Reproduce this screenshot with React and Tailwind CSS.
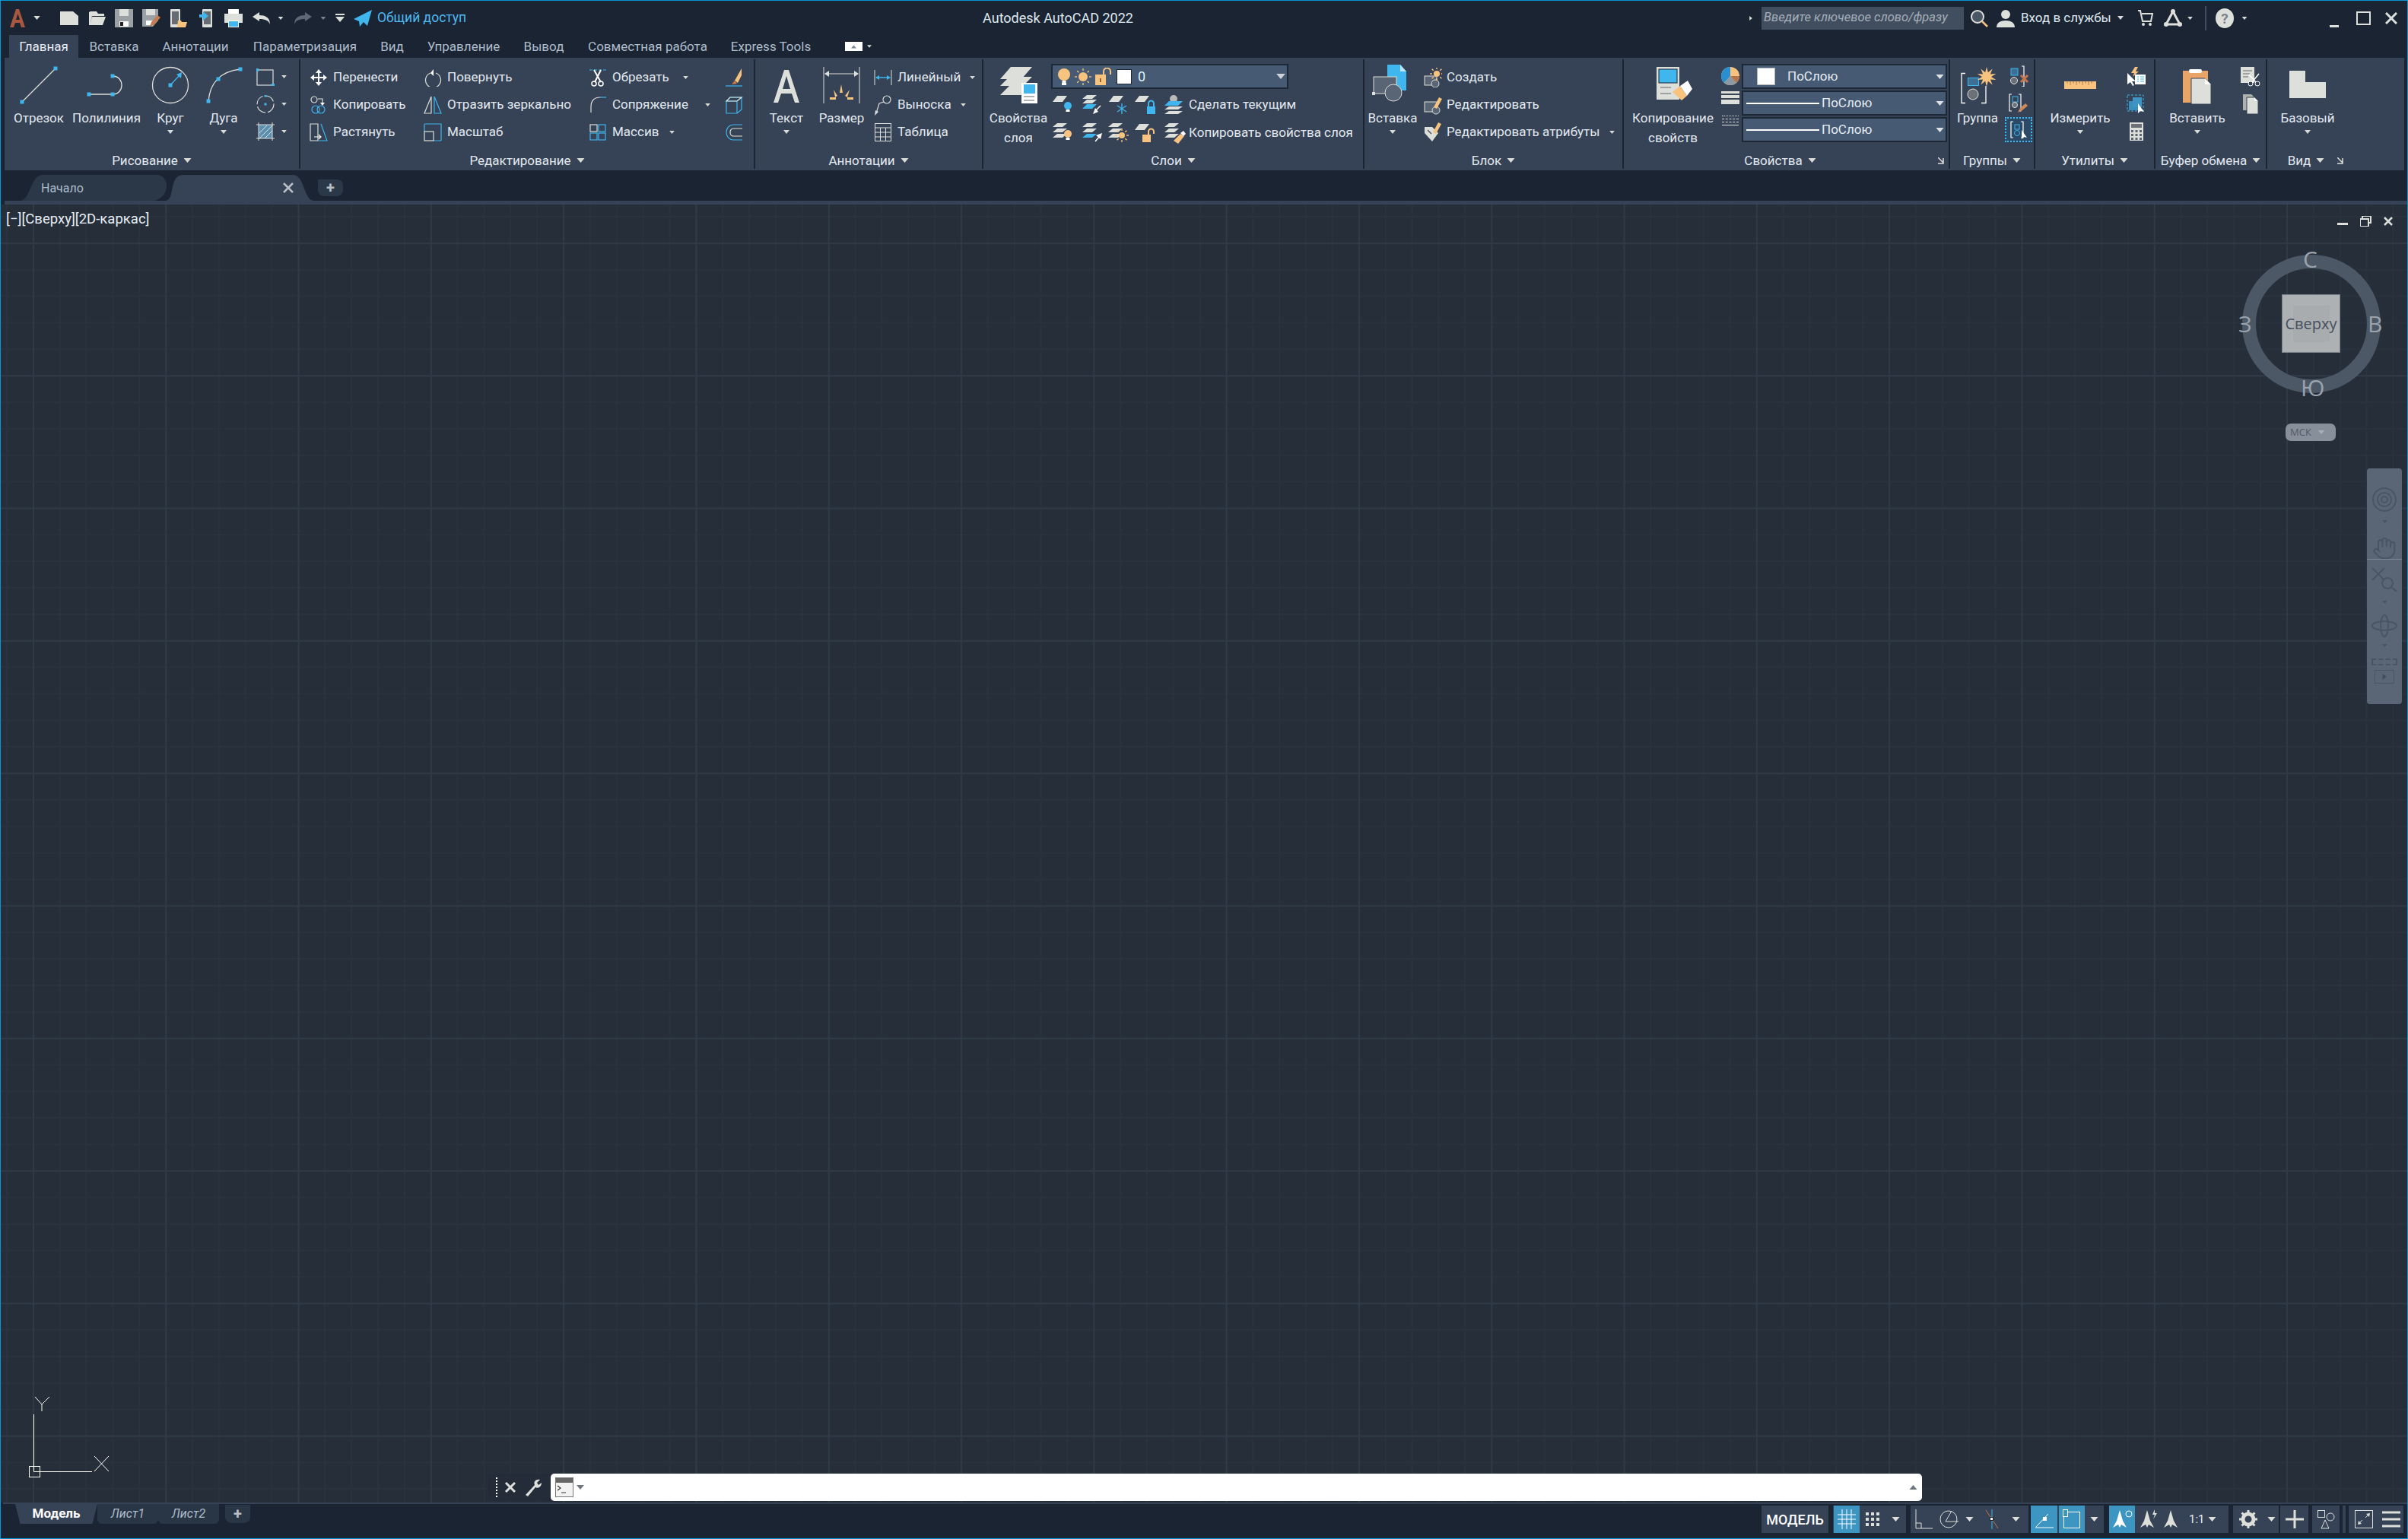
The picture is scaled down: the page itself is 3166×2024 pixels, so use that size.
import React from "react";
import { Hand } from "lucide-react";

const G = "#dcdfda";
const B = "#3fb6ee";
const O = "#f8c27f";
const W = "#ffffff";
const PANEL = "#364255";

const S = ({ w = 30, h = 30, children, className = "" }) => (
  <svg width={w} height={h} viewBox={`0 0 ${w} ${h}`} className={`block shrink-0 ${className}`}>
    {children}
  </svg>
);

const Tri = ({ w = 9, h = 5, c = "#d9dcd8", up = false, className = "" }) => (
  <svg width={w} height={h} viewBox="0 0 10 6" className={`block shrink-0 ${className}`}>
    <polygon points={up ? "0,6 10,6 5,0" : "0,0 10,0 5,6"} fill={c} />
  </svg>
);

const Dot = ({ x, y, s = 5, c = B }) => <rect x={x - s / 2} y={y - s / 2} width={s} height={s} fill={c} />;

const Layer = ({ x, y, w = 18, h = 5, f = G, sk = 6 }) => (
  <polygon points={`${x + sk},${y} ${x + w},${y} ${x + w - sk},${y + h} ${x},${y + h}`} fill={f} />
);

const Bulb = ({ x, y, f = O, r = 5 }) => (
  <g>
    <circle cx={x} cy={y} r={r} fill={f} />
    <rect x={x - 2.5} y={y + r} width={5} height={3} fill={W} />
  </g>
);

const Lock = ({ x, y, open, f = O }) => (
  <g>
    <rect x={x} y={y + 7} width={11} height={10} fill={f} />
    <path d={open ? `M${x + 8} ${y + 7}V${y + 3}a3.5 3.5 0 0 1 7 0v3` : `M${x + 2} ${y + 7}V${y + 3}a3.5 3.5 0 0 1 7 0v4`} fill="none" stroke={f} strokeWidth="2" />
  </g>
);

const Sun = ({ x, y, r = 6, f = O, s = O }) => (
  <g>
    <circle cx={x} cy={y} r={r} fill={f} />
    {[0, 45, 90, 135, 180, 225, 270, 315].map((a) => (
      <line key={a} x1={x} y1={y - r - 2} x2={x} y2={y - r - 5} stroke={s} strokeWidth="1.4" transform={`rotate(${a} ${x} ${y})`} />
    ))}
  </g>
);

const starPoints = (cx, cy, outer, inner, n) =>
  Array.from({ length: n * 2 }, (_, i) => {
    const r = i % 2 ? inner : outer;
    const a = (Math.PI * i) / n;
    return `${cx + r * Math.sin(a)},${cy - r * Math.cos(a)}`;
  }).join(" ");

// ---- title bar ----
const TitleBar = () => (
  <div className="flex h-[45px] items-center text-[#dfe7ee]">
    <S w={24} h={26} className="ml-[10px]">
      <path d="M2 25L10 1h4l8 24h-5l-2-6H9l-2 6zM10 15h5l-2.500-8z" fill="#a9583f" />
    </S>
    <Tri w={9} h={5} className="ml-[9px]" />
    <S w={24} h={20} className="ml-[26px]">
      <path d="M0 1h17l7 6v12H0z" fill={G} />
    </S>
    <S w={24} h={20} className="ml-[12px]">
      <path d="M4 1h8l2 3h8v3H6L3 19H2V2zM6 8h18l-4 11H3z" fill={G} />
    </S>
    <S w={24} h={25} className="ml-[12px]">
      <path d="M0 1h24v24H0z" fill="#9ba1a4" />
      <rect x="6" y="1" width="12" height="9" fill={G} />
      <rect x="6" y="17" width="12" height="7" fill={W} />
      <rect x="7" y="18" width="4" height="5" fill="#222" />
    </S>
    <S w={25} h={25} className="ml-[12px]">
      <path d="M0 1h21v15l-7 8H0z" fill="#9ba1a4" />
      <rect x="5" y="1" width="12" height="8" fill={G} />
      <rect x="5" y="16" width="9" height="6" fill={W} />
      <path d="M10 24l2-6 8-9 4 3-8 9z" fill="#c47b4f" />
    </S>
    <S w={22} h={24} className="ml-[12px]">
      <rect x="0" y="0" width="13" height="24" rx="1" fill={G} />
      <rect x="2" y="3" width="9" height="17" fill="#666c72" />
      <path d="M10 15h4l1 2h7l-2 7H9z" fill={O} />
    </S>
    <S w={18} h={24} className="ml-[16px]">
      <rect x="4" y="0" width="13" height="24" rx="1" fill={G} />
      <rect x="6" y="3" width="9" height="17" fill="#666c72" />
      <path d="M0 7h5V3l7 6-7 6v-4H0z" fill={B} />
    </S>
    <S w={24} h={24} className="ml-[15px]">
      <rect x="5" y="0" width="14" height="7" fill={W} />
      <rect x="0" y="6" width="24" height="12" fill={G} />
      <rect x="5" y="15" width="14" height="9" fill={W} />
      <rect x="6" y="16" width="12" height="7" fill={B} />
    </S>
    <S w={24} h={16} className="ml-[13px]">
      <path d="M0 6l9-6v4c8 0 14 3 14 12-2-5-6-7-14-7v3z" fill={G} />
    </S>
    <Tri w={8} h={4} className="ml-[9px]" />
    <S w={24} h={16} className="ml-[13px]">
      <path d="M24 6l-9-6v4C7 4 1 7 1 16c2-5 6-7 14-7v3z" fill="#5d6875" />
    </S>
    <Tri w={8} h={4} c="#7c8691" className="ml-[11px]" />
    <S w={12} h={11} className="ml-[12px]">
      <rect width="12" height="2" fill={G} />
      <polygon points="0,4 12,4 6,11" fill={G} />
    </S>
    <S w={24} h={22} className="ml-[12px]">
      <path d="M0 12L24 0l-6 21-5-5-5 6-1-7z" fill={B} />
    </S>
    <span className="ml-[7px] w-[118px] whitespace-nowrap text-[17.500px] text-[#4fb9f0]">Общий доступ</span>
    <span className="ml-[677px] w-[200px] whitespace-nowrap text-center text-[18px]">Autodesk AutoCAD 2022</span>
    <Tri w={6} h={10} c={G} className="ml-[808px] -rotate-90" />
    <div className="ml-[11px] flex h-[30px] w-[266px] items-center bg-[#414e60] pl-[3px] text-[16.500px] whitespace-nowrap text-[#a5aeb8] italic">
      Введите ключевое слово/фразу
    </div>
    <S w={24} h={24} className="ml-[8px]">
      <circle cx="10" cy="10" r="8" fill="#4c5766" stroke={G} strokeWidth="2" />
      <line x1="16" y1="16" x2="23" y2="23" stroke={O} strokeWidth="2.500" />
    </S>
    <S w={24} h={24} className="ml-[11px]">
      <circle cx="12" cy="7" r="6" fill={G} />
      <path d="M0 24c0-6 5-9 12-9s12 3 12 9z" fill={G} />
    </S>
    <span className="ml-[8px] w-[120px] whitespace-nowrap text-[17px]">Вход в службы</span>
    <Tri w={8} h={5} className="ml-[7px]" />
    <S w={20} h={22} className="ml-[19px]">
      <path d="M0 1h3l3 14h11l2-10H5" fill="none" stroke={G} strokeWidth="2" />
      <circle cx="7" cy="19" r="2" fill={G} />
      <circle cx="16" cy="19" r="2" fill={G} />
    </S>
    <S w={24} h={24} className="ml-[14px]">
      <path d="M12 3L3 20h18z" fill="none" stroke={G} strokeWidth="3" />
      <circle cx="12" cy="3" r="3" fill={G} />
      <circle cx="3" cy="20" r="3" fill={G} />
      <circle cx="21" cy="20" r="3" fill={G} />
    </S>
    <Tri w={7} h={4} className="ml-[7px]" />
    <div className="ml-[16px] h-[32px] w-[2px] bg-[#3f4d60]" />
    <S w={24} h={26} className="ml-[12px]">
      <ellipse cx="12" cy="13" rx="12" ry="13" fill={G} />
      <text x="12" y="20" textAnchor="middle" fontSize="19" fontWeight="700" fontFamily="Roboto" fill="#7c838a">?</text>
    </S>
    <Tri w={8} h={4} className="ml-[10px]" />
    <div className="mt-[22px] ml-[108px] h-[3px] w-[12px] bg-[#dcdfda]" />
    <div className="ml-[23px] h-[18px] w-[19px] border-2 border-[#dcdfda]" />
    <S w={16} h={16} className="ml-[19px]">
      <path d="M1 1l14 14M15 1L1 15" stroke={G} strokeWidth="3" />
    </S>
  </div>
);

// ---- ribbon tabs ----
const tabs = [
  ["Вставка", "w-[94px]"],
  ["Аннотации", "w-[120px]"],
  ["Параметризация", "w-[168px]"],
  ["Вид", "w-[61px]"],
  ["Управление", "w-[127px]"],
  ["Вывод", "w-[84px]"],
  ["Совместная работа", "w-[189px]"],
  ["Express Tools", "w-[135px]"],
];

const RibbonTabs = () => (
  <div className="flex h-[30px] items-center pl-[11px] text-[17px] whitespace-nowrap text-[#aebccb]">
    <div className="flex h-full w-[91px] items-center justify-center bg-[#364255] pt-[1px] text-[#e6edf4]">Главная</div>
    {tabs.map(([label, w]) => (
      <div key={label} className={`flex h-full items-center justify-center pt-[1px] ${w}`}>
        {label}
      </div>
    ))}
    <div className="ml-[30px] flex h-[12px] w-[23px] items-center justify-center bg-white">
      <Tri w={7} h={5} c="#7c8691" up />
    </div>
    <Tri w={6} h={4} className="ml-[6px]" />
  </div>
);

// ---- ribbon parts ----
const Panel = ({ w, title, corner, titleClass = "", children }) => (
  <div className={`relative flex shrink-0 flex-col ${w}`}>
    <div className="flex h-[124px] pt-[4px]">{children}</div>
    <div className={`flex h-[24px] items-center justify-center gap-[7px] text-[17px] text-[#e2e9f0] ${titleClass}`}>
      <span>{title}</span>
      <Tri w={11} h={6} className="mb-[2px]" />
    </div>
    {corner && (
      <S w={8} h={9} className={`absolute bottom-[8px] ${corner}`}>
        <path d="M0 0l7 7M7 1v7H0" fill="none" stroke={G} strokeWidth="1.500" />
      </S>
    )}
  </div>
);

const Sep = () => <div className="my-[2px] w-[2px] shrink-0 bg-[#1a2433]" />;

const Big = ({ w, label, label2, arrow, icon }) => (
  <div className={`flex shrink-0 flex-col items-center text-[#e2e9f0] ${w}`}>
    <div className="h-[64px]">{icon}</div>
    <div className="h-[22px] text-[17px] leading-[22px] whitespace-nowrap">{label}</div>
    {label2 && <div className="h-[30px] text-[17px] leading-[30px] whitespace-nowrap">{label2}</div>}
    {arrow && (
      <div className="flex h-[14px] items-center">
        <Tri w={8} h={5} />
      </div>
    )}
  </div>
);

const Small = ({ icon, label, arrow, gap = "ml-[7px]" }) => (
  <div className="flex h-[36px] items-center text-[17px] whitespace-nowrap text-[#e2e9f0]">
    <div className="flex w-[30px] shrink-0 justify-center">{icon}</div>
    {label && <span className="ml-[4px]">{label}</span>}
    {arrow && <Tri w={7} h={4} className={gap} />}
  </div>
);

const Col = ({ w, children }) => <div className={`flex shrink-0 flex-col pt-[4px] ${w}`}>{children}</div>;

const DrawPanel = () => (
  <Panel w="w-[387px]" title="Рисование">
    <Big
      w="w-[90px]"
      label="Отрезок"
      icon={
        <S w={90} h={64}>
          <line x1="23" y1="54" x2="67" y2="10" stroke={G} strokeWidth="1.300" />
          <Dot x={23} y={54} />
          <Dot x={67} y={10} />
        </S>
      }
    />
    <Big
      w="w-[88px]"
      label="Полилиния"
      icon={
        <S w={88} h={64}>
          <path d="M21 44H52C68 44 68 20 52 20" fill="none" stroke={G} strokeWidth="1.300" />
          <Dot x={21} y={44} />
          <Dot x={52} y={44} />
          <Dot x={52} y={20} />
        </S>
      }
    />
    <Big
      w="w-[80px]"
      label="Круг"
      arrow
      icon={
        <S w={80} h={64}>
          <circle cx="40" cy="32" r="23.500" fill="none" stroke={G} strokeWidth="1.300" />
          <line x1="40" y1="32" x2="53" y2="18" stroke={B} strokeWidth="1.300" />
          <polygon points="55,15 54,23 48,18" fill={B} />
          <Dot x={40} y={32} />
        </S>
      }
    />
    <Big
      w="w-[60px]"
      label="Дуга"
      arrow
      icon={
        <S w={60} h={64}>
          <path d="M10 53C12 30 25 14 52 11" fill="none" stroke={G} strokeWidth="1.300" />
          <Dot x={10} y={53} />
          <Dot x={23} y={24} />
          <Dot x={52} y={11} />
        </S>
      }
    />
    <div className="flex shrink-0 flex-col pt-[3px] pl-[10px]">
      <Small
        gap="ml-[6px]"
        arrow
        icon={
          <S w={24} h={24}>
            <rect x="1" y="3" width="21" height="20" fill="none" stroke={G} strokeWidth="1.200" />
            <Dot x={1} y={3} s={4} />
            <Dot x={22} y={23} s={4} />
          </S>
        }
      />
      <Small
        gap="ml-[6px]"
        arrow
        icon={
          <S w={24} h={24}>
            <circle cx="12" cy="12" r="11" fill="none" stroke={G} strokeDasharray="14 3" strokeWidth="1.200" />
            <Dot x={12} y={12} s={3} />
            <Dot x={12} y={1} s={3} />
          </S>
        }
      />
      <Small
        gap="ml-[6px]"
        arrow
        icon={
          <S w={24} h={24}>
            <rect x="3" y="3" width="18" height="18" fill="#5d8fb0" />
            <path d="M4 14L14 4M4 21L21 4M11 21L21 11" stroke={G} strokeWidth="1" />
            <path d="M3 0v24M21 0v24M0 3h24M0 21h24" stroke={G} strokeWidth="1" />
          </S>
        }
      />
    </div>
  </Panel>
);

const EditPanel = () => (
  <Panel w="w-[596px]" title="Редактирование">
    <div className="w-[9px] shrink-0" />
    <Col w="w-[150px]">
      <Small
        label="Перенести"
        icon={
          <S w={24} h={24}>
            <path d="M12 1l4 5h-3v5h5V8l5 4-5 4v-3h-5v5h3l-4 5-4-5h3v-5H6v3l-5-4 5-4v3h5V6H8z" fill={W} />
          </S>
        }
      />
      <Small
        label="Копировать"
        icon={
          <S w={24} h={24}>
            <circle cx="6" cy="5" r="4" fill="none" stroke={G} strokeWidth="1.200" />
            <path d="M11 4h6v6" fill="none" stroke={G} strokeWidth="1.200" />
            <polygon points="14,9 20,9 17,13" fill={W} />
            <circle cx="8" cy="18" r="5" fill="none" stroke={B} strokeWidth="1.200" />
            <circle cx="15" cy="18" r="5" fill="none" stroke={B} strokeWidth="1.200" />
          </S>
        }
      />
      <Small
        label="Растянуть"
        icon={
          <S w={24} h={24}>
            <path d="M1 1h10v22H1z" fill="none" stroke={G} strokeWidth="1.200" />
            <path d="M15 1l8 22H11" fill="none" stroke={B} strokeWidth="1.200" />
            <path d="M6 18h9m-3-3l3 3-3 3" fill="none" stroke={W} strokeWidth="1.200" />
          </S>
        }
      />
    </Col>
    <Col w="w-[217px]">
      <Small
        label="Повернуть"
        icon={
          <S w={24} h={24}>
            <path d="M16 6a10 10 0 1 1-7 0" fill="none" stroke={G} strokeWidth="1.200" />
            <polygon points="9,6 13,1 13,10" fill={W} />
          </S>
        }
      />
      <Small
        label="Отразить зеркально"
        icon={
          <S w={24} h={24}>
            <path d="M10 1L1 23h9z" fill="none" stroke={G} strokeWidth="1.200" />
            <path d="M14 1l9 22h-9z" fill="none" stroke={B} strokeWidth="1.200" />
          </S>
        }
      />
      <Small
        label="Масштаб"
        icon={
          <S w={24} h={24}>
            <path d="M1 1h22v22" fill="none" stroke={B} strokeWidth="1.200" />
            <path d="M1 1v10M23 23h-10" fill="none" stroke={B} strokeWidth="1.200" />
            <rect x="1" y="11" width="12" height="12" fill="none" stroke={G} strokeWidth="1.200" />
          </S>
        }
      />
    </Col>
    <Col w="w-[179px]">
      <Small
        label="Обрезать"
        arrow
        gap="ml-[18px]"
        icon={
          <S w={24} h={24}>
            <path d="M1 2h22" stroke={B} strokeDasharray="4 2" strokeWidth="1.200" />
            <path d="M7 2l9 16M16 2L8 18" stroke={W} strokeWidth="2" />
            <circle cx="7" cy="20" r="3" fill="none" stroke={W} strokeWidth="1.500" />
            <circle cx="16" cy="20" r="3" fill="none" stroke={W} strokeWidth="1.500" />
          </S>
        }
      />
      <Small
        label="Сопряжение"
        arrow
        gap="ml-[22px]"
        icon={
          <S w={24} h={24}>
            <path d="M3 22V14C3 6 8 2 15 2" fill="none" stroke={G} strokeWidth="1.200" />
            <path d="M15 2h8" stroke={B} strokeWidth="1.200" />
          </S>
        }
      />
      <Small
        label="Массив"
        arrow
        gap="ml-[14px]"
        icon={
          <S w={24} h={24}>
            {[
              [2, 2, G],
              [13, 2, B],
              [2, 13, B],
              [13, 13, B],
            ].map(([x, y, c]) => (
              <rect key={`${x}-${y}`} x={x} y={y} width="9" height="9" fill="none" stroke={c} strokeWidth="1.200" />
            ))}
          </S>
        }
      />
    </Col>
    <Col w="w-[30px]">
      <Small
        icon={
          <S w={24} h={24}>
            <path d="M22 0L13 16l4 3 5-10z" fill={O} />
            <path d="M13 16l-4 5 7-1z" fill="#c47b4f" />
            <line x1="1" y1="23" x2="23" y2="23" stroke={B} strokeWidth="1.200" />
          </S>
        }
      />
      <Small
        icon={
          <S w={24} h={24}>
            <path d="M2 7h14v16H2zM2 7l5-5h15l-6 5M22 2v16l-6 5" fill="none" stroke={B} strokeWidth="1.200" />
            <path d="M7 2h15l-6 5H2z" fill="none" stroke={G} strokeWidth="1.200" />
          </S>
        }
      />
      <Small
        icon={
          <S w={24} h={24}>
            <path d="M23 2H11a9 10 0 0 0 0 20h12" fill="none" stroke={B} strokeWidth="1.200" />
            <path d="M23 7H11a4 5 0 0 0 0 10h12" fill="none" stroke={G} strokeWidth="1.200" />
          </S>
        }
      />
    </Col>
  </Panel>
);

const AnnotationPanel = () => (
  <Panel w="w-[298px]" title="Аннотации">
    <div className="w-[5px] shrink-0" />
    <Big
      w="w-[72px]"
      label="Текст"
      arrow
      icon={
        <S w={72} h={64}>
          <path d="M33 12h6l14 43h-6l-4-12H29l-4 12h-6zM31 37h10l-5-17z" fill={G} />
        </S>
      }
    />
    <Big
      w="w-[73px]"
      label="Размер"
      icon={
        <S w={73} h={64}>
          <path d="M13 8v48M60 8v48" stroke={G} strokeWidth="1" />
          <path d="M15 17h43" stroke={G} strokeWidth="1" />
          <path d="M14 17l6-4v8zM59 17l-6-4v8z" fill={G} />
          <path d="M36 31l2 11-4 0zM26 38l5 8-3 2zM47 38l-3 10-3-2zM21 48h8v3h-8zM44 48h8v3h-8z" fill={O} />
        </S>
      }
    />
    <div className="w-[3px] shrink-0" />
    <Col w="w-[145px]">
      <Small
        label="Линейный"
        arrow
        gap="ml-[12px]"
        icon={
          <S w={24} h={24}>
            <path d="M1 2v20M23 2v20" stroke={G} strokeWidth="1" />
            <path d="M3 12h18" stroke={B} strokeWidth="1.500" />
            <path d="M2 12l5-3v6zM22 12l-5-3v6z" fill={B} />
          </S>
        }
      />
      <Small
        label="Выноска"
        arrow
        gap="ml-[12px]"
        icon={
          <S w={24} h={28}>
            <circle cx="17" cy="7" r="5" fill="none" stroke={G} strokeWidth="1.200" />
            <path d="M13 10L7 12 3 25" fill="none" stroke={G} strokeWidth="1.200" />
            <polygon points="1,28 2,21 6,23" fill={G} />
          </S>
        }
      />
      <Small
        label="Таблица"
        icon={
          <S w={22} h={24}>
            <rect x="0.500" y="0.500" width="21" height="23" fill="none" stroke={G} />
            <path d="M0 6h22M0 12h22M0 18h22M7.500 6v18M14.500 6v18" stroke={G} strokeWidth="1" />
          </S>
        }
      />
    </Col>
  </Panel>
);

const LayerCombo = () => (
  <div className="mt-[4px] flex h-[33px] w-[312px] items-center border-2 border-[#1d2837] bg-[#475a73] text-[18px] text-[#dff1fb]">
    <S w={18} h={26} className="ml-[6px]">
      <Bulb x={9} y={10} r={8} />
      <rect x="6" y="21" width="6" height="3" fill={W} />
    </S>
    <S w={28} h={28} className="ml-[2px]">
      <Sun x={14} y={14} r={6} />
    </S>
    <S w={22} h={24} className="ml-[2px]">
      <rect x="0" y="9" width="14" height="14" fill={O} />
      <path d="M11 9V5a4.500 4.500 0 0 1 9 0v4" fill="none" stroke={O} strokeWidth="2" />
      <rect x="6" y="14" width="1.500" height="5" fill="#6a4a2a" />
    </S>
    <div className="ml-[6px] h-[20px] w-[20px] border border-[#1d2837] bg-white" />
    <span className="ml-[8px]">0</span>
    <Tri w={12} h={7} c="#cdd3d8" className="mr-[2px] ml-auto" />
  </div>
);

const LayerIcon = ({ children }) => (
  <div className="flex h-[36px] w-[36px] shrink-0 items-center justify-center">
    <S w={36} h={28}>
      {children}
    </S>
  </div>
);

const LayerPanel = () => (
  <Panel w="w-[499px]" title="Слои">
    <div className="w-[3px] shrink-0" />
    <Big
      w="w-[86px]"
      label="Свойства"
      label2="слоя"
      icon={
        <S w={86} h={64}>
          <Layer x={19} y={33} w={42} h={12} sk={12} />
          <Layer x={19} y={21} w={42} h={12} sk={12} />
          <Layer x={19} y={8} w={42} h={16} sk={14} />
          <rect x="47" y="29" width="21" height="27" fill={W} />
          <rect x="50" y="31" width="15" height="12" fill={B} />
          <path d="M50 47h14M50 52h14" stroke="#666" strokeWidth="1" />
        </S>
      }
    />
    <div className="flex shrink-0 flex-col">
      <LayerCombo />
      <div className="mt-[3px] -ml-[2px] flex items-center">
        <LayerIcon>
          <Layer x={4} y={2} w={19} h={8} />
          <Bulb x={24} y={15} f={B} />
        </LayerIcon>
        <LayerIcon>
          <Layer x={7} y={1} w={19} />
          <Layer x={7} y={7} w={19} />
          <Layer x={7} y={13} w={19} h={6} f={B} />
          <path d="M31 15l-7 7" stroke={W} strokeWidth="1.500" />
          <polygon points="21,26 24,18 28,23" fill={W} />
        </LayerIcon>
        <LayerIcon>
          <Layer x={6} y={2} w={19} h={8} />
          <path d="M23 12v14M17 15l12 8M29 15l-12 8" stroke={B} strokeWidth="1.400" />
        </LayerIcon>
        <LayerIcon>
          <Layer x={4} y={2} w={19} h={8} />
          <Lock x={20} y={9} f={B} />
        </LayerIcon>
        <LayerIcon>
          <circle cx="19" cy="6" r="5" fill="#b6bab8" />
          <Layer x={7} y={9} w={24} h={6} f={B} />
          <Layer x={7} y={16} w={24} h={4} />
          <Layer x={7} y={22} w={24} h={4} />
        </LayerIcon>
        <span className="ml-[3px] text-[17px] whitespace-nowrap text-[#e2e9f0]">Сделать текущим</span>
      </div>
      <div className="mt-[1px] -ml-[2px] flex items-center">
        <LayerIcon>
          <Layer x={4} y={1} w={19} />
          <Layer x={4} y={8} w={19} />
          <Layer x={4} y={15} w={19} />
          <Bulb x={24} y={15} />
        </LayerIcon>
        <LayerIcon>
          <Layer x={7} y={1} w={19} />
          <Layer x={7} y={8} w={19} />
          <Layer x={7} y={15} w={19} f={B} />
          <path d="M24 25l6-7" stroke={W} strokeWidth="1.500" />
          <polygon points="33,14 25,17 31,22" fill={W} />
        </LayerIcon>
        <LayerIcon>
          <Layer x={5} y={1} w={19} />
          <Layer x={5} y={8} w={19} />
          <Layer x={5} y={15} w={19} />
          <Sun x={23} y={17} r={4} />
        </LayerIcon>
        <LayerIcon>
          <Layer x={4} y={2} w={19} h={8} />
          <Lock x={14} y={9} open />
        </LayerIcon>
        <LayerIcon>
          <Layer x={7} y={1} w={19} />
          <Layer x={7} y={8} w={19} />
          <Layer x={7} y={15} w={19} />
          <path d="M19 24l9-9 5 3-8 10z" fill={O} />
          <path d="M28 14l4-3 3 4-3 3z" fill={W} />
        </LayerIcon>
        <span className="ml-[3px] text-[17px] whitespace-nowrap text-[#e2e9f0]">Копировать свойства слоя</span>
      </div>
    </div>
  </Panel>
);

const BlockPanel = () => (
  <Panel w="w-[339px]" title="Блок">
    <Big
      w="w-[74px]"
      label="Вставка"
      arrow
      icon={
        <S w={74} h={64}>
          <path d="M30 5h17l8 9v25H30z" fill={B} />
          <polygon points="47,5 55,14 47,14" fill="#bfe6f8" />
          <rect x="12" y="21" width="30" height="22" fill="#596474" stroke={G} />
          <circle cx="38" cy="42" r="11" fill="#596474" stroke={G} />
          <Dot x={12} y={43} s={4} c={G} />
        </S>
      }
    />
    <Col w="w-[260px]">
      <Small
        label="Создать"
        icon={
          <S w={26} h={26}>
            <rect x="3" y="11" width="16" height="12" fill="#596474" stroke={G} />
            <circle cx="17" cy="21" r="5" fill="#596474" stroke={G} />
            <Sun x={19} y={8} r={4} />
          </S>
        }
      />
      <Small
        label="Редактировать"
        icon={
          <S w={26} h={26}>
            <rect x="3" y="9" width="17" height="13" fill="#596474" stroke={G} />
            <circle cx="18" cy="20" r="5" fill="#596474" stroke={G} />
            <path d="M15 16l7-13 4 2-7 13z" fill={O} />
          </S>
        }
      />
      <Small
        label="Редактировать атрибуты"
        arrow
        gap="ml-[12px]"
        icon={
          <S w={26} h={26}>
            <path d="M3 6h10l8 8-8 11-10-11z" fill={G} />
            <path d="M14 13l7-13 4 2-7 13z" fill={O} />
            <path d="M7 10l5 5" stroke="#555" strokeWidth="1.500" />
          </S>
        }
      />
    </Col>
  </Panel>
);

const PropCombo = ({ white, children }) => (
  <div className="flex h-[33px] w-[270px] items-center border-2 border-[#1d2837] bg-[#475a73] text-[17px] whitespace-nowrap text-[#e6eef5]">
    {white && <div className="ml-[18px] h-[23px] w-[24px] border border-[#aeb3b6] bg-white" />}
    {children}
    <Tri w={11} h={6} c="#dde2e6" className="mr-[2px] ml-auto" />
  </div>
);

const PropertyPanel = () => (
  <Panel w="w-[427px]" title="Свойства" corner="right-[6px]" titleClass="pr-[16px]">
    <Big
      w="w-[129px]"
      label="Копирование"
      label2="свойств"
      icon={
        <S w={129} h={64}>
          <rect x="43" y="8" width="30" height="43" fill={G} />
          <rect x="46" y="11" width="24" height="18" fill={B} stroke="#1d2837" />
          <path d="M48 35h14M48 43h14" stroke="#666" strokeWidth="1" />
          <path d="M64 41l10-8 9 13-7 6z" fill={O} />
          <path d="M74 33l10-7 6 11-7 9z" fill={W} />
        </S>
      }
    />
    <div className="flex w-[22px] shrink-0 flex-col items-center pt-[8px]">
      <svg width="24" height="24" viewBox="0 0 24 24" className="block">
        <circle cx="12" cy="12" r="12" fill={O} />
        <path d="M12 12L12 0A12 12 0 0 0 4 21z" fill="#2a8fd0" />
        <path d="M12 12L4 21A12 12 0 0 0 20 21z" fill="#8c9aa6" />
        <path d="M12 12L20 21A12 12 0 0 0 24 12z" fill="#b5744a" />
      </svg>
      <div className="mt-[8px] flex flex-col">
        <div className="h-[3px] w-[24px] bg-[#dcdfda]" />
        <div className="mt-[2px] h-[4px] w-[24px] bg-[#dcdfda]" />
        <div className="mt-[2px] h-[6px] w-[24px] bg-[#dcdfda]" />
      </div>
      <div className="mt-[15px] flex flex-col gap-[3px]">
        <div className="h-[1px] w-[22px] border-t border-dotted border-[#dcdfda]" />
        <div className="h-[1px] w-[22px] border-t border-dashed border-[#dcdfda]" />
        <div className="h-[1px] w-[22px] border-t border-dashed border-[#dcdfda]" />
        <div className="h-[1px] w-[22px] border-t border-[#dcdfda]" />
      </div>
    </div>
    <div className="mt-[4px] ml-[4px] flex shrink-0 flex-col gap-[2px]">
      <PropCombo white>
        <span className="ml-[16px]">ПоСлою</span>
      </PropCombo>
      <PropCombo>
        <div className="ml-[4px] h-[2px] w-[96px] bg-white" />
        <span className="ml-[3px]">ПоСлою</span>
      </PropCombo>
      <PropCombo>
        <div className="ml-[4px] h-[2px] w-[96px] bg-white" />
        <span className="ml-[3px]">ПоСлою</span>
      </PropCombo>
    </div>
  </Panel>
);

const GroupPanel = () => (
  <Panel w="w-[110px]" title="Группы">
    <Big
      w="w-[72px]"
      label="Группа"
      icon={
        <S w={72} h={64}>
          <path d="M20 16.500h-5v39h5M47 33v22.500h-6" fill="none" stroke={W} strokeWidth="1.300" />
          <rect x="23.500" y="22.500" width="14" height="10" fill="#3b6f93" stroke={B} />
          <circle cx="30" cy="44" r="7" fill="#6b7177" stroke={G} />
          <polygon points={starPoints(48, 21, 13, 6, 10)} fill={O} />
        </S>
      }
    />
    <div className="flex shrink-0 flex-col">
      <div className="h-[2px]" />
      <div className="flex h-[36px] w-[36px] items-center justify-center">
        <S w={28} h={28}>
          <path d="M18 1h3v27h-3" fill="none" stroke={W} strokeWidth="1.200" />
          <rect x="4" y="4" width="9" height="9" fill="#3b6f93" stroke={B} />
          <circle cx="8" cy="20" r="4.500" fill="#6b7177" stroke={G} />
          <path d="M17 13l9 9M26 13l-9 9" stroke="#c8754c" strokeWidth="3" />
        </S>
      </div>
      <div className="flex h-[36px] w-[36px] items-center justify-center">
        <S w={26} h={28}>
          <path d="M4 2H1v22h3M13 2h3v22h-3" fill="none" stroke={W} strokeWidth="1.200" />
          <rect x="5" y="5" width="7" height="7" fill="none" stroke={B} />
          <circle cx="8" cy="16" r="3.500" fill="#6b7177" stroke={G} />
          <path d="M12 26l3-6 7-6 3 3-7 6z" fill="#d08a5a" />
        </S>
      </div>
      <div className="flex h-[33px] w-[36px] items-center justify-center border-2 border-dotted border-[#3fb6ee] bg-[#2b4a68]">
        <S w={26} h={26}>
          <path d="M6 2H3v21h3M16 2h3v21h-3" fill="none" stroke={W} strokeWidth="1.200" />
          <rect x="8" y="6" width="6" height="6" fill="none" stroke={B} />
          <circle cx="11" cy="17" r="3.500" fill="none" stroke={B} />
          <path d="M17 13v12l3-3 4 1z" fill={W} />
        </S>
      </div>
    </div>
  </Panel>
);

const UtilPanel = () => (
  <Panel w="w-[156px]" title="Утилиты">
    <Big
      w="w-[118px]"
      label="Измерить"
      arrow
      icon={
        <S w={118} h={64}>
          <rect x="38" y="27" width="42" height="10" fill={O} />
          <path d="M42 27v3M46 27v5M50 27v3M54 27v5M58 27v3M62 27v5M66 27v3M70 27v5M74 27v3" stroke="#b58850" strokeWidth="1" />
        </S>
      }
    />
    <div className="flex shrink-0 flex-col pt-[3px]">
      {[
        <S key="a" w={26} h={26}>
          <path d="M11 0L6 8h4l-2 5 8-7h-4l3-6z" fill={O} />
          <rect x="11" y="10" width="14" height="13" fill={W} />
          <path d="M14 13h2M18 13h5M14 16h2M18 16h5M14 19h2M18 19h5" stroke={B} strokeWidth="1.200" />
          <path d="M1 8v15l4-3 3 5 2-1-3-5h5z" fill={W} />
        </S>,
        <S key="b" w={26} h={26}>
          <rect x="1" y="1" width="21" height="21" fill="none" stroke={B} strokeDasharray="3 2" />
          <rect x="3" y="9" width="13" height="12" fill="#3b8fbd" />
          <rect x="8" y="4" width="12" height="13" fill="#3f94c4" />
          <path d="M15 12v13l3-3 5 1z" fill={W} />
        </S>,
        <S key="c" w={18} h={24}>
          <rect width="18" height="24" fill={G} />
          <rect x="2" y="2" width="14" height="5" fill="#6b7177" />
          <path d="M2 10h3v3H2zM7.500 10h3v3h-3zM13 10h3v3h-3zM2 15h3v3H2zM7.500 15h3v3h-3zM13 15h3v3h-3zM2 20h3v3H2zM7.500 20h3v3h-3zM13 20h3v3h-3z" fill="#5d6470" />
        </S>,
      ].map((icon, i) => (
        <div key={i} className="flex h-[36px] w-[30px] items-center justify-center">
          {icon}
        </div>
      ))}
    </div>
  </Panel>
);

const ClipPanel = () => (
  <Panel w="w-[145px]" title="Буфер обмена">
    <Big
      w="w-[110px]"
      label="Вставить"
      arrow
      icon={
        <S w={110} h={64}>
          <rect x="36" y="13" width="33" height="42" fill="#e9a568" />
          <rect x="44" y="11" width="17" height="5" rx="2" fill={W} />
          <path d="M47 23h18l8 8v26H47z" fill={G} stroke={PANEL} />
          <polygon points="65,23 73,31 65,31" fill={W} />
        </S>
      }
    />
    <div className="flex shrink-0 flex-col pt-[3px]">
      <div className="flex h-[36px] w-[30px] items-center justify-center">
        <S w={26} h={26}>
          <path d="M0 0h18v21H0z" fill={G} />
          <path d="M3 5h12M3 9h9M3 13h7" stroke="#666" strokeWidth="1" />
          <path d="M11 10l9 10M24 9l-9 11" stroke={W} strokeWidth="1.500" />
          <circle cx="13" cy="22" r="3" fill={PANEL} stroke={W} />
          <circle cx="22" cy="22" r="3" fill={PANEL} stroke={W} />
        </S>
      </div>
      <div className="flex h-[36px] w-[30px] items-center justify-center">
        <S w={20} h={26}>
          <path d="M0 0h11l4 4v17H0z" fill="#aeb2ae" />
          <path d="M5 4h10l5 5v17H5z" fill={G} stroke={PANEL} />
          <polygon points="15,4 20,9 15,9" fill={W} />
        </S>
      </div>
    </div>
  </Panel>
);

const ViewPanel = () => (
  <Panel w="w-[178px]" title="Вид" corner="right-[78px]" titleClass="pr-[76px]">
    <Big
      w="w-[106px]"
      label="Базовый"
      arrow
      icon={
        <S w={106} h={64}>
          <path d="M29 13h21v15h27v21H29z" fill={G} />
        </S>
      }
    />
  </Panel>
);

const Ribbon = () => (
  <div className="ml-[5px] flex h-[148px] w-[3155px] bg-[#364255]">
    <DrawPanel />
    <Sep />
    <EditPanel />
    <Sep />
    <AnnotationPanel />
    <Sep />
    <LayerPanel />
    <Sep />
    <BlockPanel />
    <Sep />
    <PropertyPanel />
    <Sep />
    <GroupPanel />
    <Sep />
    <UtilPanel />
    <Sep />
    <ClipPanel />
    <Sep />
    <ViewPanel />
  </div>
);

// ---- drawing tabs ----
const DocTabs = () => (
  <div className="flex h-[40px] items-end pl-[25px]">
    <div className="flex h-[34px] w-[196px] items-center bg-[#2b3848] pt-[2px] pl-[28px] text-[16px] text-[#aebccb] [clip-path:path('M0_34C14_34_14_0_30_0H180C198_0_198_30_176_34Z')]">
      Начало
    </div>
    <div className="-ml-[5px] flex h-[34px] w-[196px] items-center justify-end bg-[#364255] pr-[27px] [clip-path:path('M0_34C14_34_4_0_24_0H168C184_0_182_34_196_34Z')]">
      <S w={14} h={14}>
        <path d="M1 1l12 12M13 1L1 13" stroke="#b9bec4" strokeWidth="2.500" />
      </S>
    </div>
    <div className="mb-[6px] ml-[5px] flex h-[22px] w-[33px] items-center justify-center rounded-tr-[8px] rounded-b-[8px] bg-[#2b3848] text-[20px] leading-none font-bold text-[#b9bec4]">
      +
    </div>
  </div>
);

// ---- canvas overlays ----
const ViewCube = () => (
  <div className="absolute top-[66px] right-[35px] h-[182px] w-[182px]">
    <div className="absolute inset-0 rounded-full border-[18px] border-[#4d5866]" />
    <div className="absolute top-[52px] left-[52px] flex h-[77px] w-[77px] items-center justify-center border border-[#78808a] bg-[#adb1b3] text-[20px] text-[#454f5d] [font-family:'Open_Sans',sans-serif]">
      <div className="absolute top-[14px] left-[14px] h-[48px] w-[48px] bg-[#a8acaf]" />
      <span className="relative">Сверху</span>
    </div>
    <span className="absolute -top-[12px] left-[80px] text-[30px] leading-[36px] text-[#9aa3ad] [font-family:'Open_Sans',sans-serif]">С</span>
    <span className="absolute -bottom-[11px] left-[77px] text-[30px] leading-[36px] text-[#9aa3ad] [font-family:'Open_Sans',sans-serif]">Ю</span>
    <span className="absolute top-[73px] -left-[5px] text-[30px] leading-[36px] text-[#9aa3ad] [font-family:'Open_Sans',sans-serif]">З</span>
    <span className="absolute top-[73px] left-[165px] text-[30px] leading-[36px] text-[#9aa3ad] [font-family:'Open_Sans',sans-serif]">В</span>
    <div className="absolute top-[222px] left-[57px] flex h-[23px] w-[66px] items-center gap-[8px] rounded-[7px] bg-[#878f9a] pl-[6px] text-[13px] text-[#505a68] [font-family:'Open_Sans',sans-serif]">
      МСК
      <Tri w={10} h={5} c="#a9afb6" />
    </div>
  </div>
);

const NavBar = () => (
  <div className="absolute top-[347px] right-[7px] flex h-[310px] w-[46px] flex-col items-center rounded-[4px] bg-[#5a6675] pt-[24px] text-[#4a5564]">
    <S w={34} h={34}>
      <circle cx="17" cy="17" r="15" fill="none" stroke="#4a5564" strokeWidth="2" />
      <circle cx="17" cy="17" r="9" fill="none" stroke="#4a5564" strokeWidth="2" />
      <circle cx="17" cy="17" r="4" fill="none" stroke="#4a5564" strokeWidth="2" />
    </S>
    <Tri w={7} h={4} c="#4a5564" className="mt-[10px]" />
    <Hand size={32} strokeWidth={1.5} className="mt-[17px] shrink-0" />
    <div className="-mt-[2px] h-[1px] w-full shrink-0 bg-[#7f8995]" />
    <S w={36} h={34} className="mt-[9px]">
      <path d="M2 2l16 16M18 2L2 18" stroke="#4a5564" strokeWidth="2" />
      <circle cx="22" cy="22" r="7" fill="none" stroke="#4a5564" strokeWidth="2" />
      <path d="M27 27l7 6" stroke="#4a5564" strokeWidth="2" />
    </S>
    <Tri w={7} h={4} c="#4a5564" className="mt-[11px]" />
    <S w={36} h={32} className="mt-[13px]">
      <ellipse cx="18" cy="16" rx="16" ry="6" fill="none" stroke="#4a5564" strokeWidth="2" />
      <ellipse cx="18" cy="16" rx="5" ry="14" fill="none" stroke="#4a5564" strokeWidth="2" />
    </S>
    <Tri w={7} h={4} c="#4a5564" className="mt-[8px]" />
    <div className="mt-[15px] h-[9px] w-[34px] shrink-0 border-2 border-dashed border-[#4a5564]" />
    <div className="mt-[6px] flex h-[18px] w-[26px] shrink-0 items-center justify-center border border-[#4a5564]">
      <Tri w={8} h={10} c="#3f4a5a" className="-rotate-90" />
    </div>
  </div>
);

const CommandLine = () => (
  <div className="absolute top-[1669px] left-[640px] flex h-[36px] w-[1886px]">
    <div className="flex w-[83px] shrink-0 items-center rounded-l-[4px] bg-[#232c38] pl-[11px]">
      <div className="h-[26px] border-l-2 border-dotted border-white" />
      <S w={16} h={16} className="ml-[9px]">
        <path d="M2 2l12 12M14 2L2 14" stroke={G} strokeWidth="3" />
      </S>
      <S w={24} h={24} className="ml-[9px]">
        <path d="M3 22L15 9c-2-5 2-8 7-7l-4 4 2 3 4-3c0 5-4 8-8 6L6 24z" fill={G} />
      </S>
    </div>
    <div className="flex flex-1 items-center rounded-[5px] bg-white px-[6px]">
      <S w={24} h={26}>
        <rect x="0.500" y="0.500" width="23" height="25" fill="#f2f2f2" stroke="#777" />
        <rect x="1" y="1" width="22" height="6" fill="#666" />
        <path d="M3 11l4 3-4 3M8 20h6" fill="none" stroke="#333" strokeWidth="1.200" />
      </S>
      <Tri w={10} h={6} c="#6e7680" className="ml-[4px]" />
      <Tri w={11} h={6} c="#6e7680" up className="ml-auto" />
    </div>
  </div>
);

const Ucs = () => (
  <S w={150} h={115} className="absolute top-[1566px] left-[30px]">
    <path d="M13.500 25v75.500H90" fill="none" stroke={W} strokeWidth="1" />
    <rect x="7.500" y="93.500" width="14" height="14" fill="none" stroke={W} />
    <path d="M15 2l9 10 10-10M24 12v9" fill="none" stroke={W} strokeWidth="1" />
    <path d="M93 80l19 20M112 80L93 100" fill="none" stroke={W} strokeWidth="1" />
  </S>
);

const Canvas = () => (
  <div className="relative h-[1707px] bg-[#252e39] bg-[linear-gradient(to_right,#2f3a47_2px,transparent_2px),linear-gradient(to_bottom,#2f3a47_2px,transparent_2px),linear-gradient(to_right,#29333e_2px,transparent_2px),linear-gradient(to_bottom,#29333e_2px,transparent_2px)] bg-[size:174.3px_174.3px,174.3px_174.3px,34.86px_34.86px,34.86px_34.86px] bg-[position:42px_50px,42px_50px,7px_15px,7px_15px]">
    <div className="absolute top-[9px] left-[7px] text-[18.500px] leading-[20px] text-[#e6edf4]">[−][Сверху][2D-каркас]</div>
    <div className="absolute top-[15px] right-[19px] flex items-center">
      <div className="mt-[6px] h-[3px] w-[14px] bg-[#dcdfda]" />
      <S w={15} h={14} className="ml-[16px]">
        <path d="M0 4h11v10H0zM3 4V0h11v9h-3" fill="none" stroke={G} strokeWidth="2" />
      </S>
      <S w={12} h={12} className="ml-[16px]">
        <path d="M1 1l10 10M11 1L1 11" stroke={G} strokeWidth="2.500" />
      </S>
    </div>
    <ViewCube />
    <NavBar />
    <Ucs />
    <CommandLine />
  </div>
);

// ---- status bar ----
const Cell = ({ on, w = "w-[34px]", children }) => (
  <div className={`flex h-full items-center justify-center ${w} ${on ? "bg-[#3d95c2]" : ""}`}>{children}</div>
);

const Group = ({ w, children }) => <div className={`flex h-[36px] shrink-0 bg-[#364255] ${w}`}>{children}</div>;

const StatusTri = () => <Tri w={11} h={6} c={G} />;

const Rocket = ({ c = G }) => <path d="M12 2l4 14 5 9-7-4-2 4-2-4-7 4 5-9z" fill={c} />;

const StatusBar = () => (
  <div className="flex h-[46px] flex-col">
    <div className="ml-[3px] h-[2px] bg-[#364255]" />
    <div className="flex h-[44px]">
      <div className="flex h-[26px] items-center text-[16px] whitespace-nowrap text-[#aebccb]">
        <div className="ml-[19px] flex h-full w-[108px] items-center justify-center rounded-b-[6px] bg-[#364255] text-[17px] font-bold text-white [clip-path:polygon(0_0,100%_0,94%_100%,6%_100%)]">
          Модель
        </div>
        <div className="flex h-full w-[80px] items-center justify-center rounded-b-[6px] bg-[#293646] italic">Лист1</div>
        <div className="flex h-full w-[80px] items-center justify-center rounded-b-[6px] bg-[#293646] italic">Лист2</div>
        <div className="ml-[8px] flex h-[24px] w-[33px] items-center justify-center rounded-b-[8px] bg-[#293646] text-[20px] font-bold text-[#b9bec4] not-italic">+</div>
      </div>
      <div className="mt-[2px] mr-[5px] ml-auto flex">
        <Group w="w-[88px]">
          <Cell w="w-full">
            <span className="text-[18px] font-medium text-white">МОДЕЛЬ</span>
          </Cell>
        </Group>
        <Group w="ml-[6px] w-[96px]">
          <div className="w-[1px]" />
          <Cell on>
            <S w={24} h={26}>
              <path d="M6 0v26M12 0v26M18 0v26M0 7h24M0 13h24M0 19h24" stroke={W} strokeWidth="1" />
            </S>
          </Cell>
          <Cell>
            <S w={20} h={20}>
              <path d="M1 1h4v4H1zM8 1h4v4H8zM15 1h4v4h-4zM1 8h4v4H1zM8 8h4v4H8zM15 8h4v4h-4zM1 15h4v4H1zM8 15h4v4H8zM15 15h4v4h-4z" fill={G} />
            </S>
          </Cell>
          <Cell w="w-[26px]">
            <StatusTri />
          </Cell>
        </Group>
        <Group w="ml-[6px] w-[155px]">
          <Cell w="w-[36px]">
            <S w={24} h={26}>
              <path d="M1 0v25h22" fill="none" stroke={G} strokeWidth="1" />
              <path d="M1 18h7v7" fill="none" stroke={G} strokeWidth="1" />
            </S>
          </Cell>
          <Cell w="w-[30px]">
            <S w={26} h={24}>
              <circle cx="12" cy="12" r="11" fill="none" stroke={G} />
              <path d="M16 1L8 15h17" fill="none" stroke={G} />
            </S>
          </Cell>
          <Cell w="w-[22px]">
            <StatusTri />
          </Cell>
          <Cell w="w-[38px]">
            <S w={20} h={26}>
              <path d="M2 1l16 24" stroke="#c0764c" />
              <path d="M10 0v26" stroke={B} />
              <rect x="7.500" y="10.500" width="4" height="4" fill="#fff" stroke="#222" />
            </S>
          </Cell>
          <Cell w="w-[24px]">
            <StatusTri />
          </Cell>
        </Group>
        <Group w="ml-[3px] w-[96px]">
          <Cell on w="w-[35px]">
            <S w={26} h={24}>
              <path d="M1 23h24M2 22L18 5" stroke={W} strokeWidth="1" fill="none" />
              <rect x="11" y="9" width="5" height="5" fill={W} />
            </S>
          </Cell>
          <div className="w-[2px]" />
          <Cell on w="w-[34px]">
            <S w={24} h={26}>
              <rect x="1.500" y="3.500" width="21" height="21" fill="none" stroke={W} />
              <rect x="0.500" y="0.500" width="6" height="9" fill="#3d95c2" stroke={W} />
            </S>
          </Cell>
          <Cell w="w-[25px]">
            <StatusTri />
          </Cell>
        </Group>
        <Group w="ml-[7px] w-[157px]">
          <Cell on>
            <S w={30} h={28}>
              <Rocket c={W} />
              <circle cx="24" cy="7" r="4" fill="none" stroke={W} />
            </S>
          </Cell>
          <Cell>
            <S w={26} h={28}>
              <Rocket />
              <path d="M22 1l-3 7h3l-2 6 5-8h-3z" fill={G} />
            </S>
          </Cell>
          <Cell w="w-[26px]">
            <S w={24} h={28}>
              <Rocket />
            </S>
          </Cell>
          <div className="flex flex-1 items-center gap-[4px] pl-[11px] text-[15px] text-[#e6edf4]">
            1:1
            <StatusTri />
          </div>
        </Group>
        <Group w="ml-[6px] w-[60px]">
          <Cell w="w-[40px]">
            <S w={24} h={24}>
              <circle cx="12" cy="12" r="7" fill="none" stroke={G} strokeWidth="5" />
              <path d="M12 0v5M12 19v5M0 12h5M19 12h5M3.500 3.500l4 4M16.500 16.500l4 4M20.500 3.500l-4 4M3.500 20.500l4-4" stroke={G} strokeWidth="3" />
            </S>
          </Cell>
          <Cell w="w-[20px]">
            <StatusTri />
          </Cell>
        </Group>
        <Group w="ml-[2px] w-[37px]">
          <Cell w="w-full">
            <S w={24} h={24}>
              <path d="M12 0v24M0 12h24" stroke={G} strokeWidth="3" />
            </S>
          </Cell>
        </Group>
        <Group w="ml-[5px] w-[36px]">
          <Cell w="w-full">
            <S w={24} h={26}>
              <rect x="1.500" y="1.500" width="9" height="9" fill="none" stroke={G} />
              <circle cx="18" cy="10" r="5" fill="none" stroke={G} />
              <path d="M11 14l-5 11h10z" fill="none" stroke={G} />
            </S>
          </Cell>
        </Group>
        <div className="ml-[4px] h-[36px] w-[4px] bg-[#364255]" />
        <Group w="ml-[4px] w-[72px]">
          <Cell w="w-[40px]">
            <S w={24} h={24}>
              <rect x="0.500" y="0.500" width="23" height="23" fill="none" stroke={G} />
              <path d="M5 18l5-5M19 5l-5 5" stroke={G} />
              <path d="M4 19l1-5 4 4zM20 4l-1 5-4-4z" fill={G} />
            </S>
          </Cell>
          <Cell w="w-[32px]">
            <S w={24} h={22}>
              <path d="M0 2h24M0 11h24M0 20h24" stroke={G} strokeWidth="3" />
            </S>
          </Cell>
        </Group>
      </div>
    </div>
  </div>
);

export default function App() {
  return (
    <div className="flex h-[2024px] w-[3166px] flex-col overflow-hidden border border-[#0696d7] bg-[#1a2433] [font-family:Roboto,sans-serif]">
      <TitleBar />
      <RibbonTabs />
      <Ribbon />
      <DocTabs />
      <div className="ml-[5px] h-[5px] bg-[#364255]" />
      <Canvas />
      <StatusBar />
    </div>
  );
}
